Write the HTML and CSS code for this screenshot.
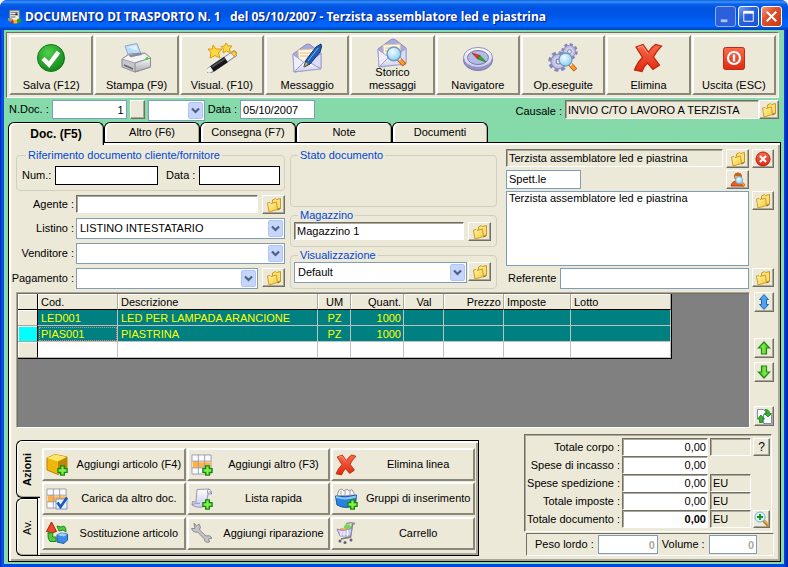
FILE: index.html
```html
<!DOCTYPE html>
<html lang="it">
<head>
<meta charset="utf-8">
<title>Documento di trasporto</title>
<link rel="stylesheet" href="styles.css">
</head>
<body>
<svg class="defs" aria-hidden="true">
  <defs>
    <linearGradient id="gold" x1="0" y1="0" x2="1" y2="1"><stop offset="0" stop-color="#fff6b0"/><stop offset="1" stop-color="#f7c838"/></linearGradient>
    <linearGradient id="lilac" x1="0" y1="0" x2="0" y2="1"><stop offset="0" stop-color="#ffffff"/><stop offset="1" stop-color="#c9c9ee"/></linearGradient>
    <linearGradient id="red" x1="0" y1="0" x2="0" y2="1"><stop offset="0" stop-color="#fb6a4c"/><stop offset="1" stop-color="#dd2a10"/></linearGradient>
    <linearGradient id="lime" x1="0" y1="0" x2="1" y2="0"><stop offset="0" stop-color="#b4f56a"/><stop offset="1" stop-color="#3fc41d"/></linearGradient>
    <linearGradient id="steel" x1="0" y1="0" x2="0" y2="1"><stop offset="0" stop-color="#fafafa"/><stop offset="1" stop-color="#a9a9b0"/></linearGradient>
    <radialGradient id="green" cx=".4" cy=".3" r=".8"><stop offset="0" stop-color="#4fcf4a"/><stop offset="1" stop-color="#0b7f14"/></radialGradient>
    <radialGradient id="glass" cx=".4" cy=".35" r=".7"><stop offset="0" stop-color="#f2fcff"/><stop offset="1" stop-color="#86cdf0"/></radialGradient>
  </defs>
  <symbol id="folder" viewBox="0 0 16 16">
    <path d="M6.500 3 L9.500 1.500 L10.500 2.500 L14.500 1.500 L14.500 11 L6 13z" fill="#fbe07a" stroke="#c99a1a"/>
    <path d="M1.500 6 L4 5.500 L5 6.500 L10.500 5 L11.500 12.500 L3 15z" fill="url(#gold)" stroke="#cf9f22"/>
    <path d="M11.500 13 L14.500 11.500" stroke="#8e6a0c" fill="none"/>
  </symbol>
  <symbol id="plus" viewBox="0 0 12 12">
    <path d="M4 1h4v3h3v4H8v3H4V8H1V4h3z" fill="#8bee4a" stroke="#128a12" stroke-width="1.500"/>
  </symbol>
  <symbol id="cross" viewBox="0 0 30 30">
    <path d="M3 4 L10 1.500 L15.500 9 Q18.500 4 22.500 1.500 L28.500 3 Q23.500 8 20.500 14 L26.500 22 L20 26.500 L14.500 20 Q11 23 9 28.500 L1.500 27 Q4 20 9.500 14.500z" fill="url(#red)" stroke="#c32208" stroke-width="1.200"/>
    <path d="M5 4.500 L9.500 3 L15 11" stroke="#ffa48c" fill="none"/>
  </symbol>
  <symbol id="envelope" viewBox="0 0 30 30">
    <path d="M1 11 L14 1.500 Q16 .5 18 1.500 L29 10 V25 L2 29z" fill="#a9a9dd" stroke="#8c8cc4"/>
    <path d="M6 7 L23 6 L24 20 L7 21z" fill="#fff8e4" stroke="#e2c79c"/>
    <path d="M8 10h12M8 13h10" stroke="#f0b77a"/>
    <path d="M1 11.500 L13 20 L2 29z" fill="#efeffc" stroke="#a3a3d2"/>
    <path d="M29 10.500 L16 20 L29 25.500z" fill="#dcdcf5" stroke="#a3a3d2"/>
    <path d="M2 29 L12 19 Q14.500 17.500 17 19 L29 26z" fill="url(#lilac)" stroke="#9c9ccb"/>
  </symbol>
  <symbol id="lens" viewBox="0 0 20 20">
    <path d="M12 12 L17.500 18" stroke="#b34e0c" stroke-width="4.500"/>
    <path d="M12.500 12.500 L17 17.500" stroke="#ff9c2c" stroke-width="3"/>
    <path d="M12 13.500 L14 11.500" stroke="#f4f4f4" stroke-width="1.500"/>
    <circle cx="7.500" cy="7.500" r="6.500" fill="url(#glass)" stroke="#6e9bc0" stroke-width="1.300"/>
  </symbol>
  <symbol id="gear" viewBox="0 0 20 20">
    <circle cx="10" cy="10" r="8" fill="none" stroke="#8585b8" stroke-width="3.500" stroke-dasharray="3.600 2.680"/>
    <circle cx="10" cy="10" r="7.200" fill="#babae2" stroke="#8787b9"/>
    <circle cx="10" cy="10" r="5" fill="#cfcfee"/>
    <circle cx="10" cy="10" r="2.300" fill="#ece9d8" stroke="#7d7db0"/>
  </symbol>
  <symbol id="sheet" viewBox="0 0 22 22">
    <path d="M1 1h20v20H1z" fill="#fbfbff" stroke="#9c9caa"/>
    <path d="M1.500 7.500h19v7h-19z" fill="#ffb347"/>
    <path d="M1 7.500h20M1 14.500h20M7.700 1v20M14.300 1v20" stroke="#9c9caa"/>
    <path d="M1.500 8v6M8.200 8.500h5.500M15 8.500h5.500" stroke="#ffd9a0"/>
  </symbol>
  <symbol id="chevron" viewBox="0 0 15 17">
    <rect x=".5" y=".5" width="14" height="16" rx="1.500" fill="#c5d5fb" stroke="#b2c5f2"/>
    <path d="M4 6.500 L7.500 10 L11 6.500" fill="none" stroke="#4d6185" stroke-width="2.200"/>
  </symbol>
  <symbol id="arrow-up" viewBox="0 0 16 16">
    <path d="M8 2 L13.500 8 H10.500 V14 H5.500 V8 H2.500z" fill="url(#lime)" stroke="#168c12" stroke-width="1.200"/>
  </symbol>
</svg>

<header class="titlebar">
  <svg class="app-icon" viewBox="0 0 16 16" aria-hidden="true">
    <path d="M3 1h10v12H3z" fill="#f2f2ea" stroke="#85857d"/><path d="M4 3h8M4 5.500h8M4 8h5" stroke="#5d5d58"/><path d="M9 4h2v2H9z" fill="#222"/>
    <path d="M1 9h4v3H1z" fill="#8f9b7b"/><path d="M3 14 L6 10 L8 14z" fill="#d4280f"/><path d="M7 11h4v4H7z" fill="#eebb14"/><circle cx="13" cy="12" r="2.500" fill="#2b9a28"/>
  </svg>
  <h1 class="title">DOCUMENTO DI TRASPORTO N. 1 &nbsp; del 05/10/2007 - Terzista assemblatore led e piastrina</h1>
  <div class="window-buttons">
    <button class="win-btn dim" type="button" aria-label="Riduci"><svg viewBox="0 0 20 20"><path d="M5 14.500h7" stroke="#a9c1f8" stroke-width="3"/></svg></button>
    <button class="win-btn" type="button" aria-label="Ingrandisci"><svg viewBox="0 0 20 20"><path d="M5 5.500h10V15H5z" fill="none" stroke="#fff"/><path d="M4.500 5.500h11" stroke="#fff" stroke-width="3"/></svg></button>
    <button class="win-btn close" type="button" aria-label="Chiudi"><svg viewBox="0 0 20 20"><path d="M5 5 L15 15 M15 5 L5 15" stroke="#fff" stroke-width="2.200"/></svg></button>
  </div>
</header>

<main class="client">
  <nav class="toolbar">
    <button class="tool" type="button"><svg viewBox="0 0 30 30"><circle cx="15" cy="15" r="13.500" fill="url(#green)" stroke="#0c7a14"/><path d="M7 15.500 L13 21.500 L22.500 9" fill="none" stroke="#fff" stroke-width="4.500"/></svg><span>Salva (F12)</span></button>
    <button class="tool" type="button"><svg viewBox="0 0 30 30"><path d="M4 3 L16 0.500 L20 11 L8 14z" fill="#b9dcfb" stroke="#85aedb"/><path d="M6 4 L15 2 L17 8z" fill="#dff0ff"/><path d="M1 16 L8 11 L24 10 L29.500 15 V24 L14 29 L1 24z" fill="#c7c7cb" stroke="#8b8b90"/><path d="M1 16 L8 11.500 L10 14 L20 11 L24 10.500 L29.500 15 L14 20z" fill="#f4f4f6" stroke="#a2a2a8"/><path d="M8 12 L20 10 L21 12 L9 14z" fill="#8a8a92"/><path d="M14 20 V29 L29.500 24 V15z" fill="url(#steel)" stroke="#8b8b90"/><path d="M3 22 L12 26" stroke="#66666c" stroke-width="1.500"/><circle cx="26" cy="15.500" r="1.500" fill="#40d629"/></svg><span>Stampa (F9)</span></button>
    <button class="tool" type="button"><svg viewBox="0 0 30 30"><path d="M2 28 L27 11" stroke="#8b8b90" stroke-width="6.500" stroke-linecap="round"/><path d="M2 27.500 L27 11" stroke="#f2f2f4" stroke-width="4.500" stroke-linecap="round"/><path d="M5 26 L19 16.500" stroke="#15151a" stroke-width="6.500"/><path d="M5 24 L18 15.500" stroke="#55555f" stroke-width="1.500"/><path d="M6 2 L9 6 L15 6 L11.500 10 L13 15 L8 12.500 L3 15 L4 9.500 L1 6 L5.500 6z" fill="#ffda3e" stroke="#d99a10"/><path d="M19 0 L21 3 L25 3 L22.500 6 L23.500 9.500 L19.500 8 L16 10 L16.500 6 L14 3.500 L17.500 3z" fill="#ffda3e" stroke="#d99a10"/><path d="M27 7 L28 9.500 L30 10.500 L28 11.500 L27 14 L26 11.500 L24 10.500 L26 9.500z" fill="#ffda3e" stroke="#d99a10" stroke-width=".8"/></svg><span>Visual. (F10)</span></button>
    <button class="tool" type="button"><svg viewBox="0 0 30 30"><use href="#envelope"/><path d="M12 24 L14 17 L24 4 L29 1 L29.500 4 L28 9 L18 21z" fill="#2162b8" stroke="#0d2f6d"/><path d="M16 18 L26 5" stroke="#79b3f2"/><path d="M12 24 L14 19 L16 21z" fill="#e9c96a" stroke="#7d6323" stroke-width=".6"/></svg><span>Messaggio</span></button>
    <button class="tool two-line" type="button"><svg viewBox="0 0 30 30"><use href="#envelope"/><use href="#lens" x="9" y="8" width="21" height="21"/></svg><span>Storico<br>messaggi</span></button>
    <button class="tool" type="button"><svg viewBox="0 0 30 30"><ellipse cx="15" cy="17" rx="14.500" ry="10.500" fill="#9595c8" stroke="#7777aa"/><ellipse cx="15" cy="14.500" rx="14.500" ry="10" fill="url(#lilac)" stroke="#8f8fc2"/><ellipse cx="15" cy="14.500" rx="10.500" ry="7" fill="#b5bce4" stroke="#7377aa"/><path d="M9 10 L17 12.500 L14.500 16z" fill="#e3371d" stroke="#a01e0b" stroke-width=".6"/><path d="M17 12.500 L23 19 L14.500 16z" fill="#30a839" stroke="#17701e" stroke-width=".6"/></svg><span>Navigatore</span></button>
    <button class="tool" type="button"><svg viewBox="0 0 30 30"><use href="#gear" x="13" y="0" width="17" height="17"/><use href="#gear" x="0" y="8" width="21" height="21"/><use href="#lens" x="10" y="9" width="20" height="20"/></svg><span>Op.eseguite</span></button>
    <button class="tool" type="button"><svg viewBox="0 0 30 30"><use href="#cross"/></svg><span>Elimina</span></button>
    <button class="tool" type="button"><svg viewBox="0 0 30 30"><rect x="4.500" y="4.500" width="21" height="22" rx="2" fill="url(#red)" stroke="#c22a14"/><circle cx="15" cy="15" r="6" fill="none" stroke="#fff" stroke-width="2.200"/><path d="M15 11.500v7" stroke="#fff" stroke-width="2.400"/></svg><span>Uscita (ESC)</span></button>
  </nav>

  <section class="doc-row">
    <label for="ndoc">N.Doc. :</label>
    <input class="field w-num right" id="ndoc" value="1">
    <button class="btn blank" type="button" aria-label="Numero"></button>
    <span class="combo w-serie"><select aria-label="Serie"><option></option></select><svg><use href="#chevron"/></svg></span>
    <label for="ddoc">Data :</label>
    <input class="field w-date" id="ddoc" value="05/10/2007">
    <label class="push" for="causale">Causale :</label>
    <input class="sunken grey w-causale" id="causale" value="INVIO C/TO LAVORO A TERZISTA" readonly>
    <button class="btn icon" type="button" aria-label="Apri causale"><svg><use href="#folder"/></svg></button>
  </section>

  <nav class="tabs">
    <button class="tab active" type="button">Doc. (F5)</button>
    <button class="tab" type="button">Altro (F6)</button>
    <button class="tab" type="button">Consegna (F7)</button>
    <button class="tab" type="button">Note</button>
    <button class="tab" type="button">Documenti</button>
  </nav>

  <div class="page">
    <section class="form">
      <div class="col-left">
        <fieldset class="group ref">
          <legend>Riferimento documento cliente/fornitore</legend>
          <div class="line">
            <label for="num">Num.:</label><input class="plain w-ref" id="num">
            <label class="gap-left" for="rdata">Data :</label><input class="plain w-rdata" id="rdata">
          </div>
        </fieldset>
        <div class="rows">
          <label for="agente">Agente :</label>
          <div class="line"><input class="sunken grow" id="agente"><button class="btn wide" type="button" aria-label="Apri agente"><svg><use href="#folder"/></svg></button></div>
          <label for="listino">Listino :</label>
          <span class="combo"><select id="listino"><option>LISTINO INTESTATARIO</option></select><svg><use href="#chevron"/></svg></span>
          <label for="venditore">Venditore :</label>
          <span class="combo"><select id="venditore"><option></option></select><svg><use href="#chevron"/></svg></span>
          <label for="pagamento">Pagamento :</label>
          <div class="line"><span class="combo grow"><select id="pagamento"><option></option></select><svg><use href="#chevron"/></svg></span><button class="btn wide" type="button" aria-label="Apri pagamento"><svg><use href="#folder"/></svg></button></div>
        </div>
      </div>

      <div class="col-mid">
        <fieldset class="group stato"><legend>Stato documento</legend></fieldset>
        <fieldset class="group">
          <legend>Magazzino</legend>
          <div class="line"><input class="sunken grow" aria-label="Magazzino" value="Magazzino 1"><button class="btn wide" type="button" aria-label="Apri magazzino"><svg><use href="#folder"/></svg></button></div>
        </fieldset>
        <fieldset class="group">
          <legend>Visualizzazione</legend>
          <div class="line snug"><span class="combo grow"><select aria-label="Visualizzazione"><option>Default</option></select><svg><use href="#chevron"/></svg></span><button class="btn wide" type="button" aria-label="Apri visualizzazione"><svg><use href="#folder"/></svg></button></div>
        </fieldset>
      </div>

      <div class="col-right">
        <input class="sunken grey span2" aria-label="Intestatario" value="Terzista assemblatore led e piastrina" readonly>
        <button class="btn" type="button" aria-label="Apri intestatario"><svg><use href="#folder"/></svg></button>
        <button class="btn" type="button" aria-label="Annulla intestatario"><svg viewBox="0 0 16 16"><circle cx="8" cy="8" r="7" fill="url(#red)" stroke="#b71c0c"/><path d="M5 5 L11 11 M11 5 L5 11" stroke="#fff" stroke-width="2.200"/></svg></button>
        <input class="field span2 w-spett" aria-label="Titolo" value="Spett.le">
        <button class="btn col3" type="button" aria-label="Cerca contatto"><svg viewBox="0 0 16 16"><path d="M1 14 Q2 9 7 9 H10 L14 14z" fill="#e8622c" stroke="#a93c10"/><circle cx="8" cy="4.500" r="3.500" fill="#f5b583" stroke="#a8571f"/><path d="M4.500 4 Q5 0 9 1 Q12 1.500 11.500 5 Q8 4 4.500 4" fill="#c6631a"/><use href="#lens" x="5" y="4" width="11" height="11"/></svg></button>
        <textarea class="field span3" aria-label="Indirizzo">Terzista assemblatore led e piastrina</textarea>
        <button class="btn top" type="button" aria-label="Apri indirizzo"><svg><use href="#folder"/></svg></button>
        <label for="referente">Referente</label>
        <input class="field span2" id="referente">
        <button class="btn top" type="button" aria-label="Apri referente"><svg><use href="#folder"/></svg></button>
      </div>
    </section>

    <section class="grid-area">
      <div class="grid-box">
        <table>
          <colgroup><col class="c-head"><col class="c-cod"><col class="c-desc"><col class="c-um"><col class="c-qta"><col class="c-val"><col class="c-prezzo"><col class="c-imp"><col class="c-lotto"></colgroup>
          <thead><tr><th></th><th>Cod.</th><th>Descrizione</th><th class="center">UM</th><th class="right">Quant.</th><th class="center">Val</th><th class="right">Prezzo</th><th>Imposte</th><th>Lotto</th></tr></thead>
          <tbody>
            <tr class="sel"><th></th><td>LED001</td><td>LED PER LAMPADA ARANCIONE</td><td class="center">PZ</td><td class="right">1000</td><td></td><td></td><td></td><td></td></tr>
            <tr class="sel"><th class="current"></th><td class="focus">PIAS001</td><td>PIASTRINA</td><td class="center">PZ</td><td class="right">1000</td><td></td><td></td><td></td><td></td></tr>
            <tr><th></th><td></td><td></td><td></td><td></td><td></td><td></td><td></td><td></td></tr>
          </tbody>
        </table>
      </div>
      <div class="side">
        <button class="btn" type="button" aria-label="Espandi"><svg viewBox="0 0 16 16"><path d="M8 .5 L12.500 5.500 H10.500 V10.500 H12.500 L8 15.500 L3.500 10.500 H5.500 V5.500 H3.500z" fill="#4ba3f3" stroke="#2065b8"/></svg></button>
        <button class="btn up" type="button" aria-label="Sposta su"><svg><use href="#arrow-up"/></svg></button>
        <button class="btn down" type="button" aria-label="Sposta giù"><svg class="flip"><use href="#arrow-up"/></svg></button>
        <button class="btn last" type="button" aria-label="Aggiorna"><svg viewBox="0 0 16 16"><path d="M1.500 1.500h6l2 2v7h-8z" fill="#fff" stroke="#7d8fb5"/><path d="M7.500 6.500h8v9h-8z" fill="#fff" stroke="#7d8fb5"/><path d="M5 7 L8.500 11 H6.500 V14.500 H3.500 V11 H1.500z" fill="#35b528" stroke="#178011" stroke-width=".8"/><path d="M12 9 L8.500 5.500 H10.500 Q10.500 3 9 1.500 Q13.500 1.500 13.500 5.500 H15.500z" fill="#35b528" stroke="#178011" stroke-width=".8"/></svg></button>
      </div>
    </section>

    <section class="bottom">
      <div class="actions">
        <div class="vtabs"><button class="vtab active" type="button"><span>Azioni</span></button><button class="vtab" type="button"><span>Av.</span></button></div>
        <div class="action-grid">
          <button class="action" type="button"><svg viewBox="0 0 22 22"><path d="M1 4 L9 .5 L21 3 V15 L12 20.500 L1 16z" fill="#eeb70e" stroke="#b88405"/><path d="M1 4 L9 .5 L21 3 L12 7.500z" fill="#ffe765"/><path d="M12 7.500 L21 3 V15 L12 20.500z" fill="#bd8703"/><use href="#plus" x="11" y="11" width="11" height="11"/></svg><span>Aggiungi articolo (F4)</span></button>
          <button class="action" type="button"><svg viewBox="0 0 22 22"><use href="#sheet" width="21" height="21"/><use href="#plus" x="11" y="11" width="11" height="11"/></svg><span>Aggiungi altro (F3)</span></button>
          <button class="action" type="button"><svg viewBox="0 0 30 30"><use href="#cross"/></svg><span>Elimina linea</span></button>
          <button class="action" type="button"><svg viewBox="0 0 22 22"><use href="#sheet" width="21" height="21"/><path d="M10 11h11v10H10z" fill="#e6effc" stroke="#7f97c0"/><path d="M11.500 14.500 L14.500 19 L21 9.500" fill="none" stroke="#1757c0" stroke-width="2.600"/></svg><span>Carica da altro doc.</span></button>
          <button class="action" type="button"><svg viewBox="0 0 22 22"><path d="M6 1.500 L18 1 Q21 2 20.500 6 H17 L15 18 Q7 21 1 17 L1.500 13.500 L5 14z" fill="url(#lilac)" stroke="#9898b4"/><path d="M18 1 Q15.500 2 17 6 M20.500 6 Q20 3 18 4" fill="none" stroke="#8787a8"/><path d="M1 17 Q5 14 9 15.500" fill="none" stroke="#9898b4"/><use href="#plus" x="11" y="11" width="11" height="11"/></svg><span>Lista rapida</span></button>
          <button class="action" type="button"><svg viewBox="0 0 22 22"><path d="M2 8 L4 2 L7 1 L9 3 L12 1 L14 3 L17 1.500 L20 7z" fill="#f5f5f7" stroke="#9a9aa2"/><path d="M6 3v5M10 3v5M15 3v5" stroke="#a8a8b0"/><path d="M.5 8 Q11 10 21.500 7 L20.500 17 Q11 22 2 17z" fill="#2a82dc" stroke="#125aa8"/><path d="M1 9 Q11 12 21 8.500" stroke="#8cc7fb" stroke-width="2" fill="none"/><use href="#plus" x="12" y="11" width="11" height="11"/></svg><span>Gruppi di inserimento</span></button>
          <button class="action" type="button"><svg viewBox="0 0 22 22"><path d="M5.500 0 L10.500 9.500 Q5.500 12 .5 9.500z" fill="#ee4a2a" stroke="#ac210c"/><path d="M13 9 L11 4 L15 5 Q20 2 20 10 L17 8z" fill="#53c93c" stroke="#208a16"/><path d="M2 11 L7 10.500 L6.500 15 L10 15 V19.500 H4 Q1.500 17 2 11z" fill="#53c93c" stroke="#208a16"/><path d="M11 13 L15 11 L21.500 12 V18 L18 21.500 L11 20z" fill="#3f8de8" stroke="#1c58aa"/><path d="M11 13 L18 14.500 L21.500 12 L15 11z" fill="#a5d0ff"/></svg><span>Sostituzione articolo</span></button>
          <button class="action" type="button"><svg viewBox="0 0 22 22"><path d="M3 1 L5.500 4 L8 2 Q10.500 5 8.500 8 L15 14 Q18.500 12.500 21 16 L17.500 17 L18.500 20 Q13.500 21.500 13 16.500 L6.500 10 Q2 11 .5 6.500 L4 6.500z" fill="#c4c4c8" stroke="#8a8a90"/></svg><span>Aggiungi riparazione</span></button>
          <button class="action" type="button"><svg viewBox="0 0 22 22"><path d="M10 2.500h5l2 5H8z" fill="#79d94e"/><path d="M5 6h5l2 4H5z" fill="#ffad57"/><path d="M20 1.500 L17.500 2 L15.500 15 L6 17" fill="none" stroke="#777780" stroke-width="1.500"/><path d="M11 2 Q15 0 20 1.500" fill="none" stroke="#9999a4" stroke-width="1.500"/><path d="M2 7 Q9 10 17 6 L15.500 14 H5z" fill="#d3cdf3" stroke="#908abf"/><path d="M6 9v5M9 9v5M12.500 8v6" stroke="#fff"/><circle cx="5" cy="19" r="1.500" fill="#63636d"/><circle cx="10" cy="20.500" r="1.500" fill="#63636d"/><circle cx="16" cy="18" r="1.500" fill="#63636d"/></svg><span>Carrello</span></button>
        </div>
      </div>

      <div class="summary">
        <div class="totals">
          <label for="t1">Totale corpo :</label><input class="sunken right" id="t1" value="0,00"><input class="sunken grey" aria-label="Valuta corpo" readonly><button class="btn ask" type="button">?</button>
          <label for="t2">Spese di incasso :</label><input class="sunken right" id="t2" value="0,00">
          <label for="t3">Spese spedizione :</label><input class="sunken right" id="t3" value="0,00"><input class="sunken grey" aria-label="Valuta spedizione" value="EU" readonly>
          <label for="t4">Totale imposte :</label><input class="sunken right" id="t4" value="0,00"><input class="sunken grey" aria-label="Valuta imposte" value="EU" readonly>
          <label for="t5">Totale documento :</label><input class="sunken right bold" id="t5" value="0,00"><input class="sunken grey" aria-label="Valuta documento" value="EU" readonly><button class="btn" type="button" aria-label="Dettaglio totali"><svg viewBox="0 0 16 16"><path d="M9 9 L14.500 15" stroke="#c87a1c" stroke-width="3"/><path d="M9.500 9 L14.500 14" stroke="#ffc66a"/><circle cx="6" cy="6" r="5" fill="#d9f3fb" stroke="#7db2c9"/><path d="M6 3v6M3 6h6" stroke="#17901a" stroke-width="1.800"/></svg></button>
        </div>
        <div class="weights">
          <label class="first" for="peso">Peso lordo :</label><input class="field right w-peso" id="peso" value="0" disabled>
          <label for="volume">Volume :</label><input class="field right w-vol" id="volume" value="0" disabled>
        </div>
      </div>
    </section>
  </div>
</main>
</body>
</html>
```
FILE: styles.css
```css
* { box-sizing: border-box; }

:root {
  --face: #ece9d8;
  --shadow: #aca899;
  --dark: #716f64;
  --line: #7f9db9;
}

html { background: #f4f4f4; }

body {
  margin: 0;
  min-height: 100vh;
  display: flex;
  flex-direction: column;
  background: linear-gradient(90deg, #0019cf 0, #0855dd 2px, #0855dd 3px, #0148e0 4px, #0148e0 calc(100% - 4px), #0040dd calc(100% - 3px), #001ea0 100%);
  border-radius: 7px 7px 0 0;
  font: 11px/13px "Liberation Sans", sans-serif;
  color: #000;
}

.defs { position: absolute; width: 0; height: 0; }

button, input, select, textarea {
  font: inherit;
  color: inherit;
  margin: 0;
  border-radius: 0;
  min-width: 0;
}

button { padding: 0; }
svg { display: block; }

/* Title bar */
.titlebar {
  height: 30px;
  display: flex;
  align-items: center;
  gap: 3px;
  padding: 3px 6px 0 7px;
  border-radius: 7px 7px 0 0;
  background: linear-gradient(#0f5fd8 0, #3a93ff 2px, #0a62ea 4px, #0054e0 8px, #0055e5 15px, #0063fb 22px, #0066ff 26px, #0050d8 28px, #0040b8 30px);
}
.app-icon { width: 15px; height: 16px; flex: none; }
.title {
  flex: 1;
  margin: 0;
  font: bold 12px/16px "Noto Sans", sans-serif;
  color: #fff;
  white-space: nowrap;
  text-shadow: 1px 1px 1px #0a1883;
}
.window-buttons { display: flex; gap: 2px; }
.win-btn {
  width: 21px;
  height: 21px;
  border: 1px solid #fff;
  border-radius: 3px;
  background: linear-gradient(135deg, #7ba2f5, #2a63e2 40%, #1c50cf);
}
.win-btn svg { width: 19px; height: 19px; }
.win-btn.dim { border-color: #8eaef4; background: #2c5fdc; }
.win-btn.close { background: linear-gradient(135deg, #f0997c, #e0502c 40%, #c83a12); }

/* Client area */
.client {
  flex: 1;
  display: flex;
  flex-direction: column;
  margin: 0 4px 4px;
  background: #86d9a9;
}

.toolbar {
  display: grid;
  grid-template-columns: repeat(9, minmax(0, 1fr));
  gap: 1px;
  margin: 2px 5px 0 2px;
  padding: 2px;
  background: var(--face);
  border: 1px solid;
  border-color: var(--dark) #fff #fff var(--dark);
}
.tool {
  height: 60px;
  display: flex;
  flex-direction: column;
  align-items: center;
  justify-content: flex-end;
  gap: 6px;
  padding-bottom: 1px;
  background: var(--face);
  border: 2px solid;
  border-color: #fff #8b8778 #8b8778 #fff;
}
.tool svg { width: 30px; height: 30px; flex: none; }
.two-line { gap: 0; }
.two-line svg { margin-bottom: -2px; }

.doc-row {
  display: flex;
  align-items: flex-start;
  margin: 2px 5px 0;
  height: 22px;
}
.doc-row label { line-height: 19px; margin-right: 3px; white-space: nowrap; }
.doc-row .push { margin-left: auto; line-height: 22px; }
.doc-row .field, .doc-row .sunken { height: 19px; }
.w-num { width: 75px; }
.w-serie { width: 57px; margin-right: 3px; }
.w-date { width: 75px; }
.w-causale { width: 194px; }
.blank { width: 15px; height: 19px; margin: 0 3px; }
.doc-row .icon { width: 20px; height: 19px; }

/* Fields */
.field {
  background: #fff;
  border: 1px solid var(--line);
  padding: 0 2px;
}
.sunken {
  background: #fff;
  border: 1px solid;
  border-color: var(--dark) #fff #fff var(--dark);
  box-shadow: inset 1px 1px 0 var(--shadow);
  padding: 0 1px 0 2px;
  height: 18px;
}
.plain { background: #fff; border: 1px solid #000; height: 19px; }
.grey { background: var(--face); }
.right { text-align: right; }
.center { text-align: center; }
.bold { font-weight: bold; }
.grow { flex: 1; }
textarea { resize: none; display: block; overflow: hidden; }

.combo { display: grid; }
.combo select, .combo svg { grid-area: 1 / 1; }
.combo select {
  appearance: none;
  width: 100%;
  height: 21px;
  background: #fff;
  border: 1px solid var(--line);
  padding: 0 18px 0 3px;
}
.combo svg {
  width: 15px;
  height: 17px;
  justify-self: end;
  align-self: center;
  margin-right: 2px;
  pointer-events: none;
}

.btn {
  display: grid;
  place-items: center;
  background: var(--face);
  border: 1px solid;
  border-color: #fff var(--dark) var(--dark) #fff;
  box-shadow: inset -1px -1px 0 var(--shadow);
  height: 19px;
}
.btn svg { width: 16px; height: 16px; }
.wide { width: 23px; }

/* Tabs */
.tabs { display: flex; margin: 0 4px; }
.tab {
  width: 96px;
  height: 20px;
  background: var(--face);
  border: 1px solid #000;
  border-bottom: 0;
  border-radius: 6px 6px 0 0;
  box-shadow: inset 2px 1px 0 #fff, inset -1px 0 0 var(--shadow);
}
.tab.active {
  font-weight: bold;
  font-size: 12px;
  height: 23px;
  margin-bottom: -3px;
  z-index: 1;
}

.page {
  flex: 1;
  display: flex;
  flex-direction: column;
  margin: 0 3px 2px 4px;
  padding: 6px 6px 5px 7px;
  background: var(--face);
  border: 1px solid #000;
  box-shadow: inset 2px 2px 0 #fff, inset -2px -2px 0 var(--shadow);
}

/* Document form */
.form {
  display: grid;
  grid-template-columns: minmax(0, 269fr) minmax(0, 207fr) minmax(0, 272fr);
  gap: 5px;
}
.group {
  min-width: 0;
  margin: 0;
  border: 1px solid #d0d0bf;
  border-radius: 4px;
  padding: 1px 5px 5px 3px;
}
.group legend {
  margin-left: 4px;
  padding: 0 2px;
  line-height: 12px;
  color: #0046d5;
}
.ref { padding: 5px 4px 5px 5px; }
.ref label { line-height: 19px; white-space: nowrap; }
.w-ref { flex: 105 1 0; }
.w-rdata { flex: 81 1 0; }
.gap-left { margin-left: 4px; }
.rows {
  display: grid;
  grid-template-columns: 60px minmax(0, 1fr);
  gap: 4px 0;
  margin-top: 4px;
}
.rows label {
  justify-self: end;
  align-self: center;
  padding-right: 2px;
  white-space: nowrap;
}
.line { display: flex; gap: 4px; }
.snug { gap: 1px; }

.col-mid { display: grid; grid-template-rows: 1fr auto auto; gap: 2px; }

.col-right {
  display: grid;
  grid-template-columns: 51px minmax(0, 1fr) 23px 22px;
  grid-template-rows: 19px 19px 1fr 21px;
  gap: 2px 3px;
  padding-left: 4px;
}
.col-right label { align-self: center; padding-left: 2px; }
.span2 { grid-column: span 2; }
.span3 { grid-column: span 3; }
.col3 { grid-column: 3 / 5; width: 23px; }
.w-spett { width: 75px; }
.top { align-self: start; }

/* Lines grid */
.grid-area { flex: 1; display: flex; gap: 4px; margin-top: 3px; }
.grid-box {
  flex: 1;
  min-width: 0;
  overflow: hidden;
  min-height: 136px;
  background: #808080;
  border: 1px solid;
  border-color: var(--shadow) #fff #fff var(--shadow);
  box-shadow: inset 1px 1px 0 var(--dark);
  padding: 1px 0 0 1px;
}
table {
  table-layout: fixed;
  width: 654px;
  border-collapse: separate;
  border-spacing: 0;
  border: solid #000;
  border-width: 0 1px 1px 0;
}
.c-head { width: 20px; }
.c-cod { width: 80px; }
.c-desc { width: 200px; }
.c-um { width: 33px; }
.c-qta { width: 53px; }
.c-val { width: 40px; }
.c-prezzo { width: 60px; }
.c-imp { width: 67px; }
.c-lotto { width: 100px; }
th, td {
  height: 16px;
  padding: 0 2px 0 3px;
  font-weight: normal;
  line-height: 14px;
  text-align: left;
  white-space: nowrap;
  border: solid #c0c0c0;
  border-width: 0 1px 1px 0;
  background: #fff;
}
th { background: var(--face); border-color: var(--shadow); box-shadow: inset 1px 1px 0 #fff; }
thead th { border-bottom-color: #000; }
th:first-child { border-right-color: #000; }
th.right, td.right { text-align: right; }
th.center, td.center { text-align: center; }
.sel td { background: #008080; color: #ff0; }
.current { background: #0ff; }
.sel .focus { outline: 1px dotted #f08070; outline-offset: -2px; }

.side { display: flex; flex-direction: column; width: 20px; }
.side .btn { height: 20px; width: 20px; }
.up { margin-top: 26px; }
.down { margin-top: 4px; }
.side .last { margin-top: auto; margin-bottom: 2px; }
.flip { transform: rotate(180deg); }

/* Bottom */
.bottom {
  display: grid;
  grid-template-columns: minmax(0, 463fr) minmax(0, 250fr);
  gap: 45px;
  margin-top: 6px;
}
.actions { display: flex; margin-top: 6px; }
.vtabs { display: flex; flex-direction: column; width: 22px; margin-right: -1px; }
.vtab {
  flex: 1;
  display: grid;
  place-items: center;
  width: 21px;
  background: var(--face);
  border: 1px solid #000;
  border-right: 0;
  border-radius: 6px 0 0 6px;
  box-shadow: inset 1px 1px 0 #fff, inset 0 -1px 0 var(--shadow);
}
.vtab.active { width: 24px; padding-right: 2px; font-weight: bold; z-index: 1; }
.vtab span { writing-mode: vertical-rl; transform: rotate(180deg); }
.action-grid {
  flex: 1;
  display: grid;
  grid-template-columns: repeat(3, minmax(0, 1fr));
  gap: 1px;
  padding: 7px 3px 5px 4px;
  border: 1px solid #000;
  box-shadow: inset 2px 2px 0 #fff, inset -2px -2px 0 var(--shadow);
}
.action {
  height: 33px;
  display: flex;
  align-items: center;
  padding: 0 2px;
  background: var(--face);
  border: 2px solid;
  border-color: #fff #8b8778 #8b8778 #fff;
}
.action svg { width: 22px; height: 22px; flex: none; overflow: visible; }
.action span { flex: 1; padding-left: 8px; white-space: nowrap; }

.totals {
  display: grid;
  grid-template-columns: minmax(0, 1fr) 86px 41px 17px;
  gap: 0 2px;
  margin-right: 2px;
  padding: 3px 1px;
  border: 1px solid;
  border-color: var(--dark) #fff #fff var(--dark);
  box-shadow: inset 1px 1px 0 var(--shadow);
}
.totals label { grid-column: 1; text-align: right; line-height: 18px; white-space: nowrap; }
.totals .btn, .totals .sunken { height: 18px; }
.ask { font-size: 12px; }
.weights {
  display: flex;
  align-items: center;
  margin: 1px 0 0 2px;
  padding: 1px 16px 1px 8px;
  border: 1px solid;
  border-color: var(--dark) #fff #fff var(--dark);
}
.weights label { margin: 0 4px; white-space: nowrap; }
.weights .first { margin-left: auto; }
.weights .field { height: 19px; font-weight: bold; color: var(--shadow); }
.w-peso { width: 61px; }
.w-vol { width: 49px; }
```
